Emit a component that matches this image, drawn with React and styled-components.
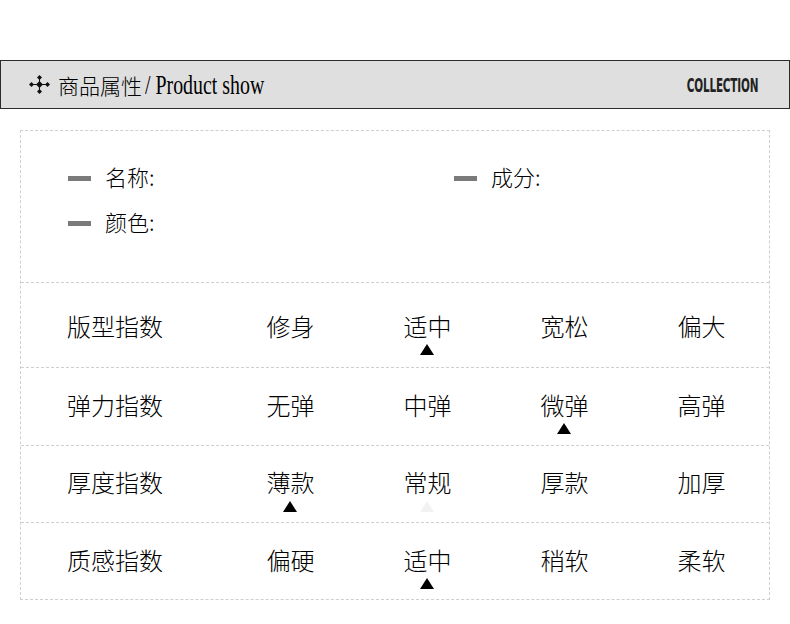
import React from "react";
import styled, { createGlobalStyle } from "styled-components";

const GlobalStyle = createGlobalStyle`
    body {
        margin: 0;
        background: #fff;
        font-family: "Noto Sans CJK SC", "Noto Sans", sans-serif;
    }
`;

const info = [
    { label: "名称:" },
    { label: "成分:" },
    { label: "颜色:" }
];

const rows = [
    { name: "版型指数", options: ["修身", "适中", "宽松", "偏大"], pick: 1, height: 85, lift: 0 },
    { name: "弹力指数", options: ["无弹", "中弹", "微弹", "高弹"], pick: 2, height: 78, lift: 5 },
    { name: "厚度指数", options: ["薄款", "常规", "厚款", "加厚"], pick: 0, ghost: 1, height: 77, lift: 5 },
    { name: "质感指数", options: ["偏硬", "适中", "稍软", "柔软"], pick: 1, height: 76, lift: 4, last: true }
];

function CrossIcon() {
    return (
        <svg width="21" height="19" viewBox="0 0 21 19">
            <g fill="#111" stroke="#111">
                <line x1="2" y1="9.5" x2="19" y2="9.5" strokeWidth="1" />
                <line x1="10.5" y1="1.5" x2="10.5" y2="17.5" strokeWidth="1" />
                <polygon points="10.5,6 14,9.5 10.5,13 7,9.5" stroke="none" />
                <polygon points="2.5,7 5,9.5 2.5,12 0,9.5" stroke="none" />
                <polygon points="18.5,7 21,9.5 18.5,12 16,9.5" stroke="none" />
                <polygon points="10.5,0 13,2.5 10.5,5 8,2.5" stroke="none" />
                <polygon points="10.5,14 13,16.5 10.5,19 8,16.5" stroke="none" />
            </g>
        </svg>
    );
}

function App() {
    return (
        <Page>
            <GlobalStyle />
            <TitleBar>
                <Title>
                    <CrossIcon />
                    <TitleCn>商品属性</TitleCn>
                    <TitleEn>/ Product show</TitleEn>
                </Title>
                <Collection>COLLECTION</Collection>
            </TitleBar>
            <Box>
                <InfoGrid>
                    {info.map(item => (
                        <InfoItem key={item.label}>
                            <Dash />
                            {item.label}
                        </InfoItem>
                    ))}
                </InfoGrid>
                {rows.map(row => (
                    <Row
                        key={row.name}
                        $height={row.height}
                        $lift={row.lift}
                        $last={row.last}
                    >
                        <LabelCell>{row.name}</LabelCell>
                        {row.options.map((opt, idx) => (
                            <OptionCell key={opt + idx}>
                                {opt}
                                {idx === row.pick && <Marker />}
                                {idx === row.ghost && <Marker $faint />}
                            </OptionCell>
                        ))}
                    </Row>
                ))}
            </Box>
        </Page>
    );
}

const Page = styled.div`
    padding-top: 60px;
    padding-bottom: 24px;
    width: 790px;
`;

const TitleBar = styled.div`
    box-sizing: border-box;
    height: 49px;
    border: 1px solid #2b2b2b;
    background: #dfdfdf;
    display: flex;
    align-items: center;
    justify-content: space-between;
    padding: 0 31px 0 28px;
`;

const Title = styled.div`
    display: flex;
    align-items: center;
    color: #111;
`;

const TitleCn = styled.span`
    margin-left: 8px;
    font-family: "Noto Sans CJK SC", sans-serif;
    font-size: 21px;
    font-weight: 300;
    color: #000;
`;

const TitleEn = styled.span`
    display: inline-block;
    margin-left: 3px;
    font-family: "Liberation Serif", serif;
    font-size: 28px;
    transform: scaleX(0.71);
    transform-origin: left center;
    white-space: nowrap;
    color: #000;
`;

const Collection = styled.span`
    display: inline-block;
    font-family: "Liberation Sans Narrow", "DejaVu Sans Condensed", "Liberation Sans", sans-serif;
    font-weight: bold;
    font-size: 20px;
    color: #222;
    transform: scaleX(0.58);
    transform-origin: right center;
    letter-spacing: -0.3px;
`;

const Box = styled.div`
    margin: 21px 20px 0 20px;
    width: 750px;
    box-sizing: border-box;
    border: 1px dashed #cfcfcf;
`;

const InfoGrid = styled.div`
    box-sizing: border-box;
    height: 152px;
    display: grid;
    grid-template-columns: 386px 1fr;
    grid-auto-rows: 45px;
    align-content: start;
    padding: 22px 0 0 47px;
    border-bottom: 1px dashed #cfcfcf;
`;

const InfoItem = styled.div`
    display: flex;
    align-items: center;
    font-size: 22px;
    font-weight: 300;
    color: #000;
`;

const Dash = styled.span`
    width: 23px;
    height: 5px;
    background: #7a7a7a;
    margin: 6px 14px 0 0;
`;

const Row = styled.div`
    box-sizing: border-box;
    display: grid;
    grid-template-columns: 200px repeat(4, 137px);
    height: ${props => props.$height}px;
    padding-bottom: ${props => props.$lift}px;
    border-bottom: ${props => (props.$last ? "none" : "1px dashed #cfcfcf")};
`;

const LabelCell = styled.div`
    display: flex;
    align-items: center;
    padding-left: 46px;
    font-size: 24px;
    font-weight: 300;
    color: #000;
`;

const OptionCell = styled.div`
    position: relative;
    display: flex;
    align-items: center;
    justify-content: center;
    padding-left: 2px;
    font-size: 24px;
    font-weight: 300;
    color: #000;
`;

const Marker = styled.span`
    position: absolute;
    top: calc(50% + 19px);
    left: 50%;
    transform: translateX(-50%);
    width: 0;
    height: 0;
    border-left: 7px solid transparent;
    border-right: 7px solid transparent;
    border-bottom: 11px solid ${props => (props.$faint ? "#f2f2f2" : "#000")};
`;

export default App;
